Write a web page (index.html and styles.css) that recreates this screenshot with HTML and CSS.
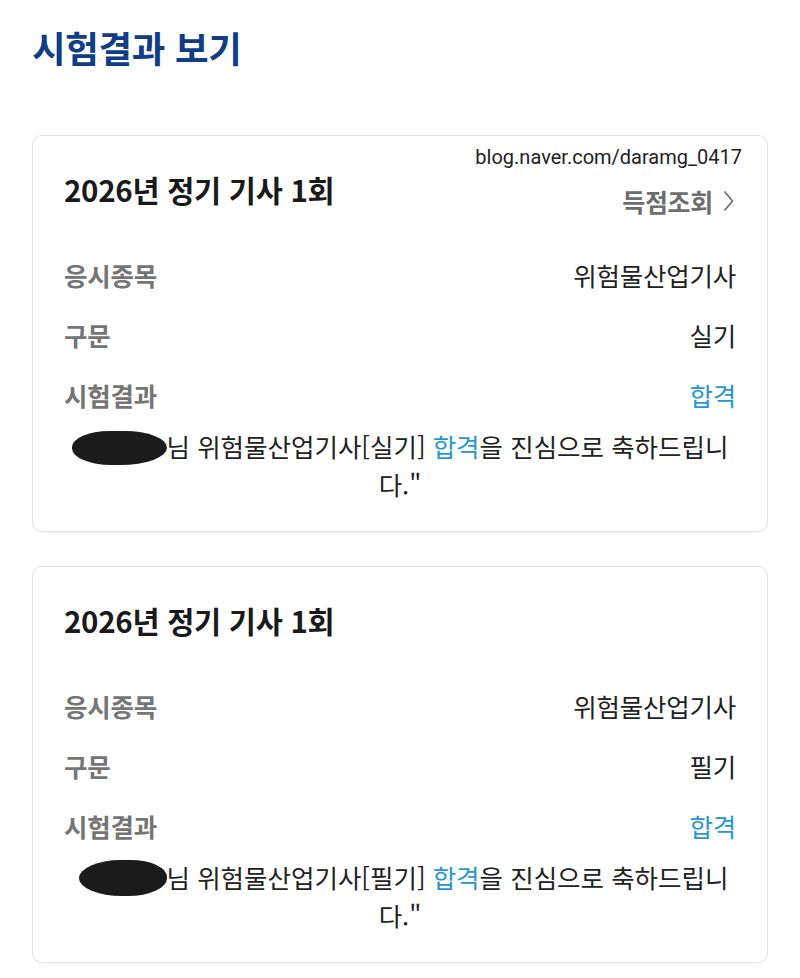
FILE: index.html
```html
<!DOCTYPE html>
<html lang="ko">
<head>
<meta charset="utf-8">
<title>시험결과 보기</title>
<link rel="stylesheet" href="styles.css">
</head>
<body>
<main class="page">
  <h1 class="page-title">시험결과 보기</h1>

  <section class="card">
    <span class="watermark">blog.naver.com/daramg_0417</span>
    <div class="card-head">
      <h2 class="card-title">2026년 정기 기사 1회</h2>
      <a class="score-link">득점조회<svg class="chev" width="11" height="22" viewBox="0 0 11 22"><polyline points="1.5,1.5 9.5,11 1.5,20.5" fill="none" stroke="#6e6e6e" stroke-width="1.7"/></svg></a>
    </div>
    <dl class="rows">
      <div class="row"><dt>응시종목</dt><dd>위험물산업기사</dd></div>
      <div class="row"><dt>구문</dt><dd>실기</dd></div>
      <div class="row"><dt>시험결과</dt><dd class="pass">합격</dd></div>
    </dl>
    <p class="message"><span class="blob"></span>님 위험물산업기사[실기] <span class="pass">합격</span>을 진심으로 축하드립니<br>다."</p>
  </section>

  <section class="card">
    <div class="card-head">
      <h2 class="card-title">2026년 정기 기사 1회</h2>
    </div>
    <dl class="rows">
      <div class="row"><dt>응시종목</dt><dd>위험물산업기사</dd></div>
      <div class="row"><dt>구문</dt><dd>필기</dd></div>
      <div class="row"><dt>시험결과</dt><dd class="pass">합격</dd></div>
    </dl>
    <p class="message"><span class="blob blob-2"></span>님 위험물산업기사[필기] <span class="pass">합격</span>을 진심으로 축하드립니<br>다."</p>
  </section>
</main>
</body>
</html>
```

FILE: styles.css
```css
* { box-sizing: border-box; }

html, body {
  margin: 0;
  padding: 0;
  background: #ffffff;
}

body {
  font-family: "Noto Sans CJK KR", "Noto Sans", sans-serif;
  color: #222222;
}

.page {
  padding: 27px 32px 20px 32px;
}

.page-title {
  margin: 0 0 66px 0;
  font-size: 36.5px;
  line-height: 42px;
  font-weight: 700;
  color: #0f3d86;
  letter-spacing: -0.3px;
}

.card {
  position: relative;
  border: 1px solid #e2e2e2;
  border-radius: 10px;
  padding: 35px 31px 28px 31px;
  margin-bottom: 34px;
  box-shadow: 0 1px 2px rgba(0,0,0,0.04);
}

.watermark {
  position: absolute;
  top: 8px;
  right: 25px;
  font-family: "Roboto", "Noto Sans", sans-serif;
  font-size: 20px;
  line-height: 26px;
  color: #222;
}

.card-head {
  display: flex;
  justify-content: space-between;
  align-items: flex-start;
  height: 36px;
  margin-bottom: 37px;
}

.card-title {
  margin: 0;
  font-size: 29.5px;
  line-height: 36px;
  font-weight: 700;
  color: #1a1a1a;
  letter-spacing: -0.3px;
}

.score-link {
  display: flex;
  align-items: center;
  gap: 10px;
  margin-top: 15px;
  margin-right: 2px;
  font-size: 25px;
  line-height: 30px;
  font-weight: 700;
  color: #6e6e6e;
  letter-spacing: -0.3px;
}

.chev { display: block; }

.rows {
  margin: 0;
}

.row {
  display: flex;
  justify-content: space-between;
  align-items: center;
  height: 60px;
}

.row dt {
  font-size: 25.5px;
  font-weight: 700;
  color: #757575;
  letter-spacing: -0.2px;
}

.row dd {
  margin: 0;
  font-size: 25.5px;
  color: #222;
  letter-spacing: -0.2px;
}

.row dd.pass,
.pass {
  color: #2597d2;
}

.message {
  margin: 3px 0 0 0;
  text-align: center;
  font-size: 25.5px;
  line-height: 38px;
  color: #222;
  letter-spacing: 0;
}

.blob {
  display: inline-block;
  width: 95px;
  height: 34px;
  vertical-align: -8px;
  background: #1b1b1b;
  border-radius: 40% 45% 50% 42% / 48% 50% 52% 50%;
}

.blob-2 {
  width: 88px;
  height: 36px;
  margin-left: 7px;
  border-radius: 48% 42% 45% 50% / 52% 48% 50% 50%;
}
```
